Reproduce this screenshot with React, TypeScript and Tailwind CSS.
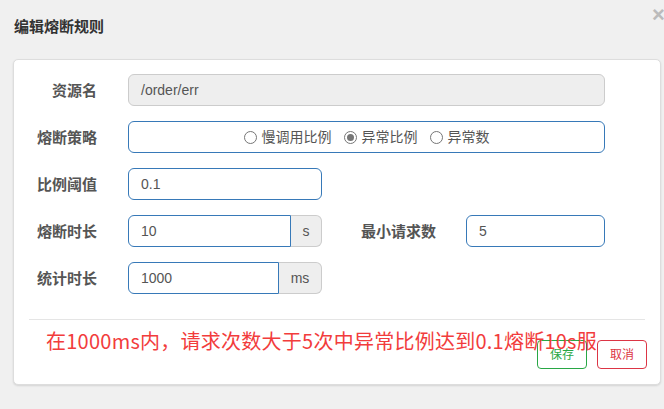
import React from "react";

const font = { fontFamily: '"Liberation Sans", "Noto Sans CJK SC", sans-serif' };

const Label = ({ children }: { children: React.ReactNode }) => (
  <div className="w-[68px] shrink-0 text-right text-[15px] font-bold text-[#555] leading-none whitespace-nowrap">
    {children}
  </div>
);

const Radio = ({ checked, label }: { checked?: boolean; label: string }) => (
  <span className="flex items-center gap-[5px]">
    <span className="w-[13px] h-[13px] rounded-full border border-[#767676] bg-white flex items-center justify-center">
      {checked && <span className="w-[7px] h-[7px] rounded-full bg-[#767676]" />}
    </span>
    <span className="text-[14px] text-[#555] leading-none">{label}</span>
  </span>
);

const TextBox = ({ value, className }: { value: string; className: string }) => (
  <div className={`h-[32px] flex items-center pl-[12px] text-[14px] text-[#555] bg-white border border-[#3779b8] ${className}`}>
    {value}
  </div>
);

const Addon = ({ text, className }: { text: string; className: string }) => (
  <div className={`h-[32px] flex items-center justify-center bg-[#eee] border border-l-0 border-[#ccc] rounded-r-[6px] text-[14px] text-[#555] ${className}`}>
    {text}
  </div>
);

export default function App() {
  return (
    <div className="relative w-[664px] h-[409px] bg-[#f0f0f0] overflow-hidden" style={font}>
      {/* Header */}
      <div className="pl-[14px] pt-[19px] h-[59px]">
        <h4 className="text-[15px] font-bold text-[#333] leading-none">编辑熔断规则</h4>
      </div>
      <span className="absolute left-[652px] top-[4px] text-[22px] font-bold text-[#bbb] leading-none">×</span>

      {/* Card */}
      <div className="ml-[13px] w-[648px] bg-white border border-[#ddd] rounded-[5px] shadow-[0_1px_2px_rgba(0,0,0,0.12)] px-[15px] pt-[14px] pb-[15px]">
        <div className="flex flex-col gap-[15px]">
          <div className="flex items-center">
            <Label>资源名</Label>
            <div className="ml-[31px] w-[477px] h-[32px] flex items-center pl-[12px] text-[14px] text-[#555] bg-[#eee] border border-[#ccc] rounded-[6px]">
              /order/err
            </div>
          </div>

          <div className="flex items-center">
            <Label>熔断策略</Label>
            <div className="ml-[31px] w-[477px] h-[32px] flex items-center justify-center gap-[12px] bg-white border border-[#3779b8] rounded-[6px]">
              <Radio label="慢调用比例" />
              <Radio checked label="异常比例" />
              <Radio label="异常数" />
            </div>
          </div>

          <div className="flex items-center">
            <Label>比例阈值</Label>
            <TextBox value="0.1" className="ml-[31px] w-[194px] rounded-[6px]" />
          </div>

          <div className="flex items-center">
            <Label>熔断时长</Label>
            <div className="ml-[31px] flex">
              <TextBox value="10" className="w-[163px] rounded-l-[6px]" />
              <Addon text="s" className="w-[31px]" />
            </div>
            <div className="ml-[39px] w-[77px] text-[15px] font-bold text-[#555] leading-none whitespace-nowrap">最小请求数</div>
            <TextBox value="5" className="ml-[28px] w-[139px] rounded-[6px]" />
          </div>

          <div className="flex items-center">
            <Label>统计时长</Label>
            <div className="ml-[31px] flex">
              <TextBox value="1000" className="w-[151px] rounded-l-[6px]" />
              <Addon text="ms" className="w-[43px]" />
            </div>
          </div>
        </div>

        <div className="mt-[25px] h-px bg-[#e5e5e5]" />

        <div className="mt-[20px] -mr-[2px] flex justify-end gap-[10px]">
          <button className="w-[50px] h-[29px] border border-[#28a745] rounded-[4px] bg-white text-[12px] text-[#28a745]">保存</button>
          <button className="w-[50px] h-[29px] border border-[#dc3545] rounded-[4px] bg-white text-[12px] text-[#dc3545]">取消</button>
        </div>
      </div>

      {/* annotation */}
      <div
        className="absolute left-[46px] top-[331px] text-[20px] leading-none tracking-[0.25px] text-[#f23c3c] whitespace-nowrap"
        style={{ fontFamily: '"Noto Sans CJK SC", sans-serif' }}
      >
        在1000ms内，请求次数大于5次中异常比例达到0.1熔断10s服
      </div>
    </div>
  );
}
